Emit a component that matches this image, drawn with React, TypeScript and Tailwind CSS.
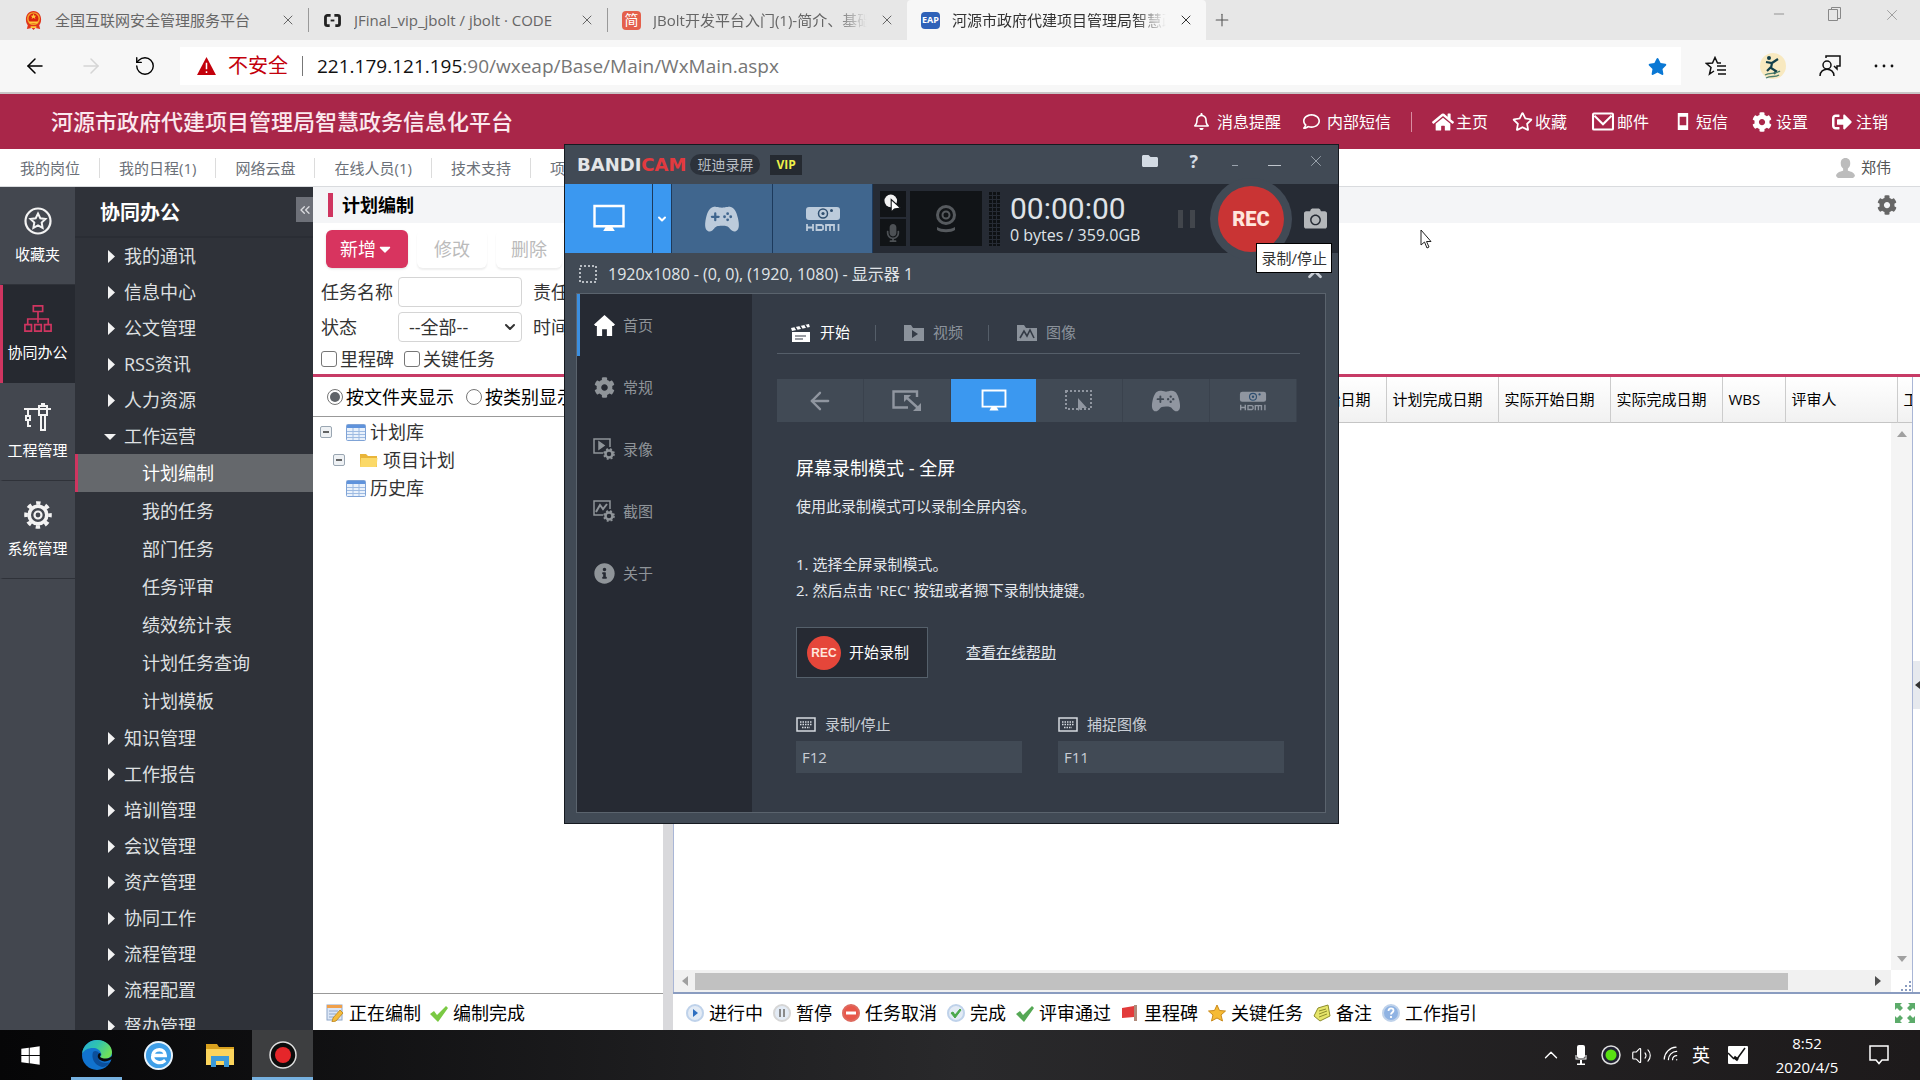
import React from "react";
import {
  FaHome, FaRegStar, FaCog, FaStar, FaWindows, FaFolder, FaCamera, FaMicrophone, FaInfoCircle,
  FaRegComment, FaSignOutAlt, FaRegBell, FaCaretDown,
} from "react-icons/fa";
import { IoGameController } from "react-icons/io5";
import { ArrowLeft, ArrowRight, RotateCw, X, Plus, Minus, ChevronDown, ChevronUp, ChevronsLeft, Wifi, Volume2 } from "lucide-react";

type P = { className?: string };

const Emblem = ({ className }: P) => (
  <svg viewBox="0 0 20 22" className={className}>
    <path d="M10 1C5 1 2 5 2 10c0 3 1 5 2 6l-1 4 5-1 2 2 2-2 5 1-1-4c1-1 2-3 2-6 0-5-3-9-8-9z" fill="#e0341c" />
    <circle cx="10" cy="9" r="6" fill="#d9230f" stroke="#f4a82a" strokeWidth="1.5" />
    <path d="M10 4l1 2h2l-1.600 1.300.6 2-2-1.100-2 1.100.6-2L7 6h2zM5.500 12h9v2h-9zM7 17h6v2H7z" fill="#ffc83a" />
  </svg>
);
const CodeMark = ({ className }: P) => (
  <svg viewBox="0 0 20 16" className={className} fill="none" stroke="#222" strokeWidth="3">
    <path d="M8 2.500H4.500a2 2 0 0 0-2 2v7a2 2 0 0 0 2 2H7M12 2.500h3.500a2 2 0 0 1 2 2v7a2 2 0 0 1-2 2H13" />
    <path d="M8 8h4" strokeWidth="2" />
  </svg>
);
const Monitor = ({ className }: P) => (
  <svg viewBox="0 0 34 30" className={className} fill="none" stroke="currentColor" strokeWidth="2.500">
    <path d="M2 2h30v21H2z" />
    <path d="M14 23h6l3 5H11z" fill="currentColor" stroke="none" />
  </svg>
);
const Hdmi = ({ className }: P) => (
  <svg viewBox="0 0 34 26" className={className}>
    <rect x="0" y="1" width="34" height="13" rx="3" fill="currentColor" />
    <circle cx="17" cy="7.500" r="4.500" fill="none" stroke="#2f4f70" strokeWidth="1.500" />
    <circle cx="17" cy="7.500" r="1.600" fill="#2f4f70" />
    <circle cx="25.500" cy="4.500" r="1.500" fill="#2f4f70" />
    <path d="M1 18v7M1 21.500h6M7 18v7M10.500 24V19h5l1.500 1v3l-1.500 1zM20 25v-6h8v6M24 19v6M32.500 18v7" fill="none" stroke="currentColor" strokeWidth="1.800" />
  </svg>
);
const Clapper = ({ className }: P) => (
  <svg viewBox="0 0 20 18" className={className} fill="currentColor">
    <path d="M0 4L18 0l.8 3L1 7zM1 8h18v10H1z" />
    <path d="M4 12h11M4 15h8" stroke="#343b46" strokeWidth="1.200" />
    <path d="M4 3l2 3M9 2l2 3M14 1l2 3" stroke="#343b46" strokeWidth="1.400" />
  </svg>
);
const VideoFolder = ({ className }: P) => (
  <svg viewBox="0 0 20 17" className={className}>
    <path d="M0 1h7l2 3h11v13H0z" fill="currentColor" />
    <path d="M8 6l6 4-6 4z" fill="#343b46" />
  </svg>
);
const ImageFolder = ({ className }: P) => (
  <svg viewBox="0 0 20 17" className={className}>
    <path d="M0 1h7l2 3h11v13H0z" fill="currentColor" />
    <path d="M3 14l4-7 3 5 3-6 4 8" fill="none" stroke="#343b46" strokeWidth="1.600" />
  </svg>
);
const RegionIcon = ({ className }: P) => (
  <svg viewBox="0 0 30 22" className={className} fill="none" stroke="currentColor" strokeWidth="2.400">
    <path d="M25 7V1.500H1.500v16H16M15 8l11 10" />
    <path d="M12 5h7l-7 7zM29 21h-8l8-8z" fill="currentColor" stroke="none" />
  </svg>
);
const AroundMouse = ({ className }: P) => (
  <svg viewBox="0 0 28 22" className={className} fill="none" stroke="currentColor" strokeWidth="2">
    <path d="M1 1h25v18H1z" strokeDasharray="2 2" />
    <path d="M13 8v13l3-3h6z" fill="currentColor" stroke="none" />
  </svg>
);
const Keyboard = ({ className }: P) => (
  <svg viewBox="0 0 20 15" className={className} fill="none" stroke="#d5dae0" strokeWidth="1.500">
    <path d="M1 1h18v13H1z" />
    <path d="M4 5h12M4 7.500h12M6 10.500h8" strokeDasharray="1.500 1" strokeWidth="1.300" />
  </svg>
);
const RecordSettings = ({ className, image }: P & { image?: boolean }) => (
  <svg viewBox="0 0 22 22" className={className} fill="none" stroke="currentColor" strokeWidth="1.500">
    <path d="M17 9V1H1v14h9" />
    {image ? <path d="M3 12l4-7 3 4 4-5" strokeWidth="2" /> : <path d="M6 4v7l5-3.500z" fill="currentColor" />}
    <circle cx="16" cy="16" r="3.500" strokeWidth="2.500" />
    <circle cx="16" cy="16" r="5" strokeDasharray="2 2" strokeWidth="1.600" />
  </svg>
);
const House = ({ className }: P) => (
  <svg viewBox="0 0 22 22" className={className} fill="#fff">
    <path d="M11 0l11 10-1.500 1.500H19V22h-5.500v-7h-5v7H3V11.500H1.500L0 10z" />
  </svg>
);
const Webcam = ({ className }: P) => (
  <svg viewBox="0 0 22 28" className={className} fill="none" stroke="#565a5e">
    <circle cx="11" cy="10" r="8.500" strokeWidth="3" />
    <circle cx="11" cy="10" r="3.500" strokeWidth="2" />
    <path d="M2 22c5 3 13 3 18 0v3c-4 3-14 3-18 0z" fill="#565a5e" stroke="none" />
  </svg>
);
const GearOutline = ({ className }: P) => (
  <svg viewBox="0 0 28 28" className={className} fill="none" stroke="#f3f3f3">
    <circle cx="14" cy="14" r="8.800" strokeWidth="3.600" />
    <circle cx="14" cy="14" r="3.500" strokeWidth="2.200" />
    <circle cx="14" cy="14" r="12" strokeWidth="3.600" strokeDasharray="4.400 5.020" strokeDashoffset="2.200" />
  </svg>
);
const OrgChart = ({ className }: P) => (
  <svg viewBox="0 0 30 30" className={className} fill="none" stroke="#cf3560" strokeWidth="1.800">
    <path d="M10 1h10v6H10zM15 7v12M4 20v-5h22v5M1 21h7v7H1zM11.500 21h7v7h-7zM22 21h7v7h-7z" />
  </svg>
);
const Crane = ({ className }: P) => (
  <svg viewBox="0 0 28 28" className={className} fill="none" stroke="#f3f3f3" strokeWidth="2">
    <path d="M0 6h27M15 3h8v9h-8zM17 12v15h4V12M17 1h4M4 6v7M2 13h4v4H2zM4 17v6h3" />
  </svg>
);
const StarRing = ({ className }: P) => (
  <svg viewBox="0 0 28 28" className={className} fill="none" stroke="#f3f3f3" strokeWidth="2.200">
    <circle cx="14" cy="14" r="12.500" />
    <path d="M14 6.500l2.300 4.800 5.200.7-3.800 3.600.9 5.200-4.600-2.500-4.600 2.500.9-5.200L6.500 12l5.200-.7z" strokeWidth="2" />
  </svg>
);
const TableIcon = ({ className }: P) => (
  <svg viewBox="0 0 20 17" className={className}>
    <rect x=".5" y=".5" width="19" height="16" rx="1" fill="#e9f1fb" stroke="#7fa3d6" />
    <path d="M1 1h18v3H1z" fill="#5f93dc" />
    <path d="M1 7.500h18M1 10.500h18M1 13.500h18M7 4v12M13 4v12" stroke="#9ebbe2" />
  </svg>
);
const YellowFolder = ({ className }: P) => (
  <svg viewBox="0 0 19 15" className={className}>
    <path d="M1 1h6l2 2h9v11H1z" fill="#e9b53a" />
    <path d="M2 5h16.500l-1 9H1z" fill="#fbd968" />
  </svg>
);
const Person = ({ className }: P) => (
  <svg viewBox="0 0 20 21" className={className} fill="#bcbcbc">
    <path d="M10 0c3.500 0 5 2.500 5 5.500 0 2.500-1 4.500-2.500 5.500v2.500c3 1 7 1.500 7.500 5.500l-2 2H2l-2-2c.5-4 4.500-4.500 7.500-5.500V11C6 10 5 8 5 5.500 5 2.500 6.500 0 10 0z" />
  </svg>
);

const PencilForm = () => (
  <svg viewBox="0 0 18 18" className="size-[18px]">
    <rect x="1" y="1" width="15" height="15" fill="#dbe6f6" stroke="#8ea6c8" />
    <path d="M1 1h15v3H1z" fill="#f0a04b" />
    <path d="M3 7h9M3 10h7M3 13h5" stroke="#8ea6c8" />
    <path d="M14 6l3 3-7 8-4 1 1-4z" fill="#f4bb3a" stroke="#b98219" strokeWidth=".8" />
  </svg>
);
const Check = ({ color }: { color: string }) => (
  <svg viewBox="0 0 18 18" className="size-[18px]"><path d="M0 10l4-3 3 4 9-9 2 2L8 18z" fill={color} /></svg>
);
const Disc = ({ kind }: { kind: "play" | "pause" | "stop" | "ok" | "help" }) => (
  <svg viewBox="0 0 18 18" className="size-[18px]">
    <circle cx="9" cy="9" r="8" fill={kind === "stop" ? "#e8574a" : kind === "help" ? "#8fb3e3" : "#e3ebf5"} stroke={kind === "stop" ? "#dd6a5f" : kind === "pause" ? "#d6d6d6" : "#bfd2ea"} strokeWidth="2" />
    {kind === "play" && <path d="M7 5l5 4-5 4z" fill="#2f6fc0" />}
    {kind === "pause" && <path d="M6 5h2v8H6zM10 5h2v8h-2z" fill="#8a8a8a" />}
    {kind === "stop" && <path d="M4 7.500h10v3H4z" fill="#fff" />}
    {kind === "ok" && <path d="M4 9l2-1 2 3 5-6 1 1-6 8z" fill="#4aa84a" stroke="#4aa84a" />}
    {kind === "help" && <path d="M6.500 7c0-3.500 5-3.500 5-.5 0 2-2.500 2-2.500 4M9 12v2" fill="none" stroke="#fff" strokeWidth="1.800" />}
  </svg>
);
const Flag = () => (
  <svg viewBox="0 0 18 18" className="size-[18px]"><path d="M1 4l12-2v11L1 14z" fill="#e23b3b" /><path d="M13 1h3v16h-3z" fill="#b08a7a" /></svg>
);
const GoldStar = () => (
  <svg viewBox="0 0 18 18" className="size-[18px]"><path d="M9 1l2.500 5.500 6 .5-4.500 4 1.500 6L9 14l-5.500 3L5 11 .5 7l6-.5z" fill="#f6bb35" stroke="#c98a1b" /></svg>
);
const Note = () => (
  <svg viewBox="0 0 18 18" className="size-[18px]"><path d="M5 4l10-3 2 11-10 5-6-5z" fill="#e6e56a" stroke="#8d8d2c" /><path d="M6 7l7-2M6 10l8-3M6 13l8-3" stroke="#8d8d2c" /></svg>
);

const tabs = [
  { icon: <Emblem className="h-[21px] w-[19px]" />, text: "全国互联网安全管理服务平台", fade: false },
  { icon: <CodeMark className="h-[15px] w-[19px]" />, text: "JFinal_vip_jbolt / jbolt · CODE", fade: false },
  { icon: <span className="flex size-[19px] items-center justify-center rounded-sm bg-[#e4604c] text-sm text-white">简</span>, text: "JBolt开发平台入门(1)-简介、基础", fade: true },
  { icon: <span className="flex h-[17px] w-[19px] items-center justify-center rounded-sm bg-[#2f62b8] text-[9px] font-bold text-white">EAP</span>, text: "河源市政府代建项目管理局智慧政务", fade: true },
];

function Browser() {
  return (
    <>
      <div className="flex h-10 shrink-0 items-stretch bg-[#e7e7e7] pl-2.5">
        {tabs.map((t, i) => (
          <div key={t.text} className={"flex w-[299px] items-center gap-3 pr-3 pl-3.5 " + (i === 3 ? "rounded-t bg-[#f7f7f7] text-[#333]" : "text-[#666]")}>
            {t.icon}
            <span className={"min-w-0 flex-1 overflow-hidden text-[15px] whitespace-nowrap " + (t.fade ? "[mask-image:linear-gradient(to_right,black_85%,transparent)]" : "")}>{t.text}</span>
            <button aria-label="关闭标签页"><X className="size-4" strokeWidth={1.5} /></button>
            {i < 2 && <span className="-mr-3 h-6 w-px bg-[#999]" />}
          </div>
        ))}
        <button aria-label="新建标签页" className="ml-1.5 text-[#555]"><Plus className="size-5" strokeWidth={1.3} /></button>
        <div className="ml-auto flex items-start gap-10 pt-1.5 pr-[19px] text-[#888]">
          <button aria-label="最小化"><Minus className="size-4" strokeWidth={1.3} /></button>
          <button aria-label="还原">
            <svg viewBox="0 0 16 16" className="size-4" fill="none" stroke="currentColor"><path d="M1.500 3.500h9v11h-9zM4.500 3.500v-2h9v11h-3" /></svg>
          </button>
          <button aria-label="关闭"><X className="size-[18px]" strokeWidth={1} /></button>
        </div>
      </div>
      <div className="flex h-[54px] shrink-0 items-center border-b-2 border-[#c9c5c6] bg-[#f7f7f7] text-black">
        <button aria-label="后退" className="ml-[23px]"><ArrowLeft className="size-6" strokeWidth={1.5} /></button>
        <button aria-label="前进" className="ml-8 text-[#d5d5d5]"><ArrowRight className="size-6" strokeWidth={1.5} /></button>
        <button aria-label="刷新" className="ml-[31px]"><RotateCw className="size-[22px] -scale-x-100" strokeWidth={1.5} /></button>
        <div className="ml-6 flex h-[38px] flex-1 items-center bg-white pr-3.5 pl-[17px] text-xl">
          <svg viewBox="0 0 20 19" className="h-[18px] w-[19px]"><path d="M10 0l10 19H0z" fill="#c3000b" /><path d="M10 6v7M10 15v2" stroke="#fff" strokeWidth="1.600" /></svg>
          <span className="ml-3 text-[#c3000b]">不安全</span>
          <span className="mx-3.5 h-5 w-px bg-[#777]" />
          <span className="text-[19px] text-[#767676]"><span className="text-[#111]">221.179.121.195</span>:90/wxeap/Base/Main/WxMain.aspx</span>
          <FaStar className="ml-auto size-[19px] text-[#0a78d4]" />
        </div>
        <div className="flex items-center gap-[33px] pr-[26px] pl-6">
          <svg viewBox="0 0 22 20" className="h-5 w-[22px]" fill="none" stroke="#111" strokeWidth="1.500"><path d="M16 7h-3.500L10 1.500 7.500 7 1.500 7.500 6 11.500 4.500 18 9 15M12 10h9M12 14h9M13 18h8" /></svg>
          <svg viewBox="0 0 26 26" className="size-[26px]"><circle cx="13" cy="13" r="13" fill="#f8e9c0" /><circle cx="9" cy="5" r="2" fill="#123f4a" /><path d="M6 9l6 1 6-4M12 10l-1 5 5 3-2 3M11 14l-4 4" fill="none" stroke="#123f4a" strokeWidth="2.200" /><path d="M5 22c5-3 10 0 15-4M6 25c5-3 9 0 13-3" fill="none" stroke="#4c7d6c" strokeWidth="1.400" /></svg>
          <svg viewBox="0 0 22 22" className="size-[22px]" fill="none" stroke="#111" strokeWidth="1.500"><circle cx="8" cy="10" r="4" /><path d="M1 21c0-9 14-9 14 0M7 3V1h14v10h-3v3l-3-3" /></svg>
          <svg viewBox="0 0 20 6" className="h-1.5 w-5" fill="#111"><circle cx="2" cy="3" r="1.400" /><circle cx="10" cy="3" r="1.400" /><circle cx="18" cy="3" r="1.400" /></svg>
        </div>
      </div>
    </>
  );
}

function TopBar() {
  return (
    <header className="flex h-[55px] shrink-0 items-center bg-[#a92649] pr-8 pl-[51px] text-white">
      <h1 className="text-[22px] font-medium text-[#fbe9ee]">河源市政府代建项目管理局智慧政务信息化平台</h1>
      <nav className="ml-auto flex items-center text-base">
        <a href="#notice" className="flex items-center gap-[7px]"><FaRegBell className="size-[17px]" />消息提醒</a>
        <a href="#im" className="ml-[22px] flex items-center gap-[7px]"><FaRegComment className="size-[17px]" />内部短信</a>
        <span className="mx-5 h-5 w-px bg-[#d98da1]" />
        <div className="flex gap-6">
          <a href="#home" className="flex items-center gap-0.5"><FaHome className="size-[22px]" />主页</a>
          <a href="#fav" className="flex items-center gap-0.5"><FaRegStar className="size-[21px]" />收藏</a>
          <a href="#mail" className="flex items-center gap-0.5">
            <svg viewBox="0 0 24 20" className="h-[19px] w-6" fill="none" stroke="currentColor" strokeWidth="2.200"><rect x="1.500" y="1.500" width="21" height="17" rx="1" /><path d="M3 4l9 9 9-9" /></svg>邮件
          </a>
          <a href="#sms" className="flex items-center gap-1">
            <svg viewBox="0 0 20 18" className="h-[17px] w-[19px]"><path d="M6 1h9v16H6z" fill="none" stroke="currentColor" strokeWidth="2" /><path d="M6 13h9v4H6zM6 1h9v3H6z" fill="currentColor" /></svg>短信
          </a>
          <a href="#settings" className="flex items-center gap-1"><FaCog className="size-5" />设置</a>
          <a href="#logout" className="flex items-center gap-1"><FaSignOutAlt className="size-5" />注销</a>
        </div>
      </nav>
    </header>
  );
}

function SubNav() {
  return (
    <div className="flex h-[38px] shrink-0 items-center border-b border-[#d9dbde] bg-white pl-px text-[15px] text-[#6b7078]">
      {["我的岗位", "我的日程(1)", "网络云盘", "在线人员(1)", "技术支持", "项目门户"].map((t) => (
        <a key={t} href="#nav" className="border-r border-[#dcdcdc] px-[19px] leading-5">{t}</a>
      ))}
      <span className="ml-auto flex items-center gap-1.5 pr-[29px] text-[#555]"><Person className="h-5 w-[19px]" />郑伟</span>
    </div>
  );
}

const modules = [
  { t: "收藏夹", i: <StarRing className="size-7" /> },
  { t: "协同办公", i: <OrgChart className="size-7" /> },
  { t: "工程管理", i: <Crane className="size-7" /> },
  { t: "系统管理", i: <GearOutline className="size-7" /> },
];
const before = ["我的通讯", "信息中心", "公文管理", "RSS资讯", "人力资源"];
const children = ["计划编制", "我的任务", "部门任务", "任务评审", "绩效统计表", "计划任务查询", "计划模板"];
const after = ["知识管理", "工作报告", "培训管理", "会议管理", "资产管理", "协同工作", "流程管理", "流程配置", "督办管理"];

const MenuGroup = ({ text, open }: { text: string; open?: boolean }) => (
  <a href="#menu" className="flex h-9 items-center pl-7">
    <svg viewBox="0 0 13 13" className="mr-2 size-[13px]" fill="#f2f2f2">
      {open ? <path d="M1 4h12l-6 6z" /> : <path d="M5 0l7 6.500L5 13z" />}
    </svg>
    {text}
  </a>
);

function Sidebar() {
  return (
    <>
      <nav className="w-[75px] shrink-0 bg-[#43474f]">
        {modules.map((m, i) => (
          <a key={m.t} href="#module" className={"flex h-[98px] flex-col items-center border-l-[3px] pt-5 pr-[3px] text-[15px] leading-5 text-white " + (i === 1 ? "border-l-[#cf3560] bg-[#262930]" : "border-l-transparent border-b border-b-[#2f3239]")}>
            {m.i}
            <span className="mt-[9px] whitespace-nowrap">{m.t}</span>
          </a>
        ))}
      </nav>
      <nav className="w-[238px] shrink-0 overflow-hidden bg-[#2f3239] text-lg text-[#dfe0e2]">
        <div className="flex h-[51px] items-center border-b-2 border-[#2a2d34] pt-0.5 pl-[25px]">
          <h2 className="text-xl font-bold text-white">协同办公</h2>
          <button aria-label="收起菜单" className="mb-1.5 ml-auto flex h-[25px] w-[17px] items-center justify-center bg-[#6d7078]"><ChevronsLeft className="size-4 text-[#d9dade]" /></button>
        </div>
        {before.map((t) => <MenuGroup key={t} text={t} />)}
        <MenuGroup text="工作运营" open />
        {children.map((t, i) => (
          <a key={t} href="#item" className={"flex h-[38px] items-center border-l-[3px] pl-16 " + (i === 0 ? "border-[#cf3560] bg-[#65686c] text-white" : "border-transparent")}>{t}</a>
        ))}
        {after.map((t) => <MenuGroup key={t} text={t} />)}
      </nav>
    </>
  );
}

const check = "size-4 appearance-none rounded-[3px] border border-[#767676] bg-white";
const radio = "size-4 appearance-none rounded-full border border-[#767676] bg-white p-[2px] bg-clip-content checked:bg-[#5f6368]";

function Filters() {
  return (
    <>
      <div className="flex h-9 shrink-0 items-center bg-[#f4f5f7] pr-[23px] pl-[15px]">
        <span className="h-6 w-[5px] bg-[#cf3560]" />
        <h2 className="ml-[9px] text-lg font-bold text-black">计划编制</h2>
        <button aria-label="页面设置" className="ml-auto text-[#666]"><FaCog className="size-5" /></button>
      </div>
      <form className="shrink-0 border-b-[3px] border-[#c73b66] bg-white pt-[7px] pb-1 pl-2 text-lg leading-[22px] text-[#333]">
        <div className="flex h-[38px] gap-[9px] pl-[5px]">
          <button type="button" className="flex w-[82px] items-center justify-center rounded-md bg-[#d8345f] text-white shadow">新增<FaCaretDown className="size-[18px]" /></button>
          <button type="button" disabled className="w-[70px] rounded-md text-[#bbb] shadow-[0_2px_2px_#eee]">修改</button>
          <button type="button" disabled className="w-[66px] rounded-md text-[#bbb] shadow-[0_2px_2px_#eee]">删除</button>
        </div>
        <div className="mt-[9px] flex h-[30px] items-center">
          <label htmlFor="task" className="w-[77px]">任务名称</label>
          <input id="task" className="h-[30px] w-[124px] rounded border border-[#d5d5d5] px-2" />
          <label htmlFor="owner" className="ml-[11px]">责任人</label>
          <input id="owner" className="ml-2 h-[30px] w-[124px] rounded border border-[#d5d5d5] px-2" />
        </div>
        <div className="mt-[5px] flex h-[30px] items-center">
          <label htmlFor="state" className="w-[77px]">状态</label>
          <span className="grid w-[124px] items-center">
            <select id="state" className="col-start-1 row-start-1 h-[30px] w-full appearance-none rounded border border-[#d5d5d5] bg-white pl-2.5"><option>--全部--</option></select>
            <ChevronDown className="pointer-events-none col-start-1 row-start-1 mr-1 size-4 justify-self-end" strokeWidth={3} />
          </span>
          <label htmlFor="time" className="ml-[11px]">时间</label>
          <input id="time" className="ml-2 h-[30px] w-[124px] rounded border border-[#d5d5d5] px-2" />
        </div>
        <div className="mt-1.5 flex h-[22px] items-center gap-2.5">
          <label className="flex items-center gap-[3px]"><input type="checkbox" className={check} />里程碑</label>
          <label className="flex items-center gap-[3px]"><input type="checkbox" className={check} />关键任务</label>
        </div>
      </form>
    </>
  );
}

const Toggle = () => (
  <button aria-label="折叠" className="flex">
    <svg viewBox="0 0 12 12" className="size-3"><rect x=".5" y=".5" width="11" height="11" rx="1.500" fill="#eef1f4" stroke="#9aa6b2" /><path d="M3 6h6" stroke="#333" strokeWidth="1.500" /></svg>
  </button>
);

const Status = ({ icon, text }: { icon: React.ReactNode; text: string }) => (
  <span className="flex items-center gap-[5px]">{icon}{text}</span>
);

const cols = ["计划完成日期", "实际开始日期", "实际完成日期"];
const th = "h-[45px] overflow-hidden border-r border-[#ccc] px-1.5 text-left font-normal whitespace-nowrap";

function Workspace() {
  return (
    <div className="flex min-h-0 flex-1 bg-white">
      <section className="flex w-[350px] shrink-0 flex-col text-lg leading-[22px]">
        <div className="flex h-10 items-center gap-3 border-b border-[#999] pl-3.5 text-black">
          <label className="flex items-center gap-[3px]"><input type="radio" name="view" defaultChecked className={radio} />按文件夹显示</label>
          <label className="flex items-center gap-[3px] whitespace-nowrap"><input type="radio" name="view" className={radio} />按类别显示</label>
        </div>
        <div className="flex-1 pt-px pl-[7px] text-[#333]">
          <div className="flex h-7 items-center"><Toggle /><TableIcon className="mr-1 ml-3.5 h-[17px] w-5" />计划库</div>
          <div className="flex h-7 items-center pl-[13px]"><Toggle /><YellowFolder className="mr-[5px] ml-3.5 h-[15px] w-[19px]" />项目计划</div>
          <div className="flex h-7 items-center pl-[26px]"><TableIcon className="mr-1 h-[17px] w-5" />历史库</div>
        </div>
        <footer className="flex h-[37px] items-center gap-[9px] border-t border-[#999] pt-0.5 pl-[13px] text-black">
          <Status icon={<PencilForm />} text="正在编制" />
          <Status icon={<Check color="#7ac943" />} text="编制完成" />
        </footer>
      </section>
      <div className="w-2.5 shrink-0 bg-[#d9d9dc]" />
      <section className="flex min-w-0 flex-1 flex-col">
        <div className="flex min-h-0 flex-1">
          <div className="flex min-w-0 flex-1 flex-col border-x border-[#a9b6d6]">
            <table className="w-full table-fixed bg-gradient-to-b from-white to-[#f1f1f1] text-[15px] text-black">
              <thead>
                <tr className="border-b border-[#c5c5c5]">
                  <th className={th}>任务名称</th>
                  <th className={th + " w-[112px]"}>计划开始日期</th>
                  {cols.map((c) => <th key={c} className={th + " w-[112px]"}>{c}</th>)}
                  <th className={th + " w-[63px]"}>WBS</th>
                  <th className={th + " w-[112px]"}>评审人</th>
                  <th className="h-[45px] w-[15px] overflow-hidden pl-1.5 text-left font-normal whitespace-nowrap">工</th>
                </tr>
              </thead>
            </table>
            <div className="flex min-h-0 flex-1 justify-end">
              <div className="flex w-[21px] flex-col items-center justify-between bg-[#f4f4f4] py-2">
                <svg viewBox="0 0 10 6" className="h-1.5 w-2.5" fill="#a0a0a0"><path d="M5 0l5 6H0z" /></svg>
                <svg viewBox="0 0 10 6" className="h-1.5 w-2.5" fill="#a0a0a0"><path d="M5 6l5-6H0z" /></svg>
              </div>
            </div>
            <div className="flex h-[22px] items-center bg-[#f1f1f1]">
              <svg viewBox="0 0 6 10" className="ml-2 h-2.5 w-1.5" fill="#a0a0a0"><path d="M6 0v10L0 5z" /></svg>
              <span className="mr-[87px] ml-[7px] h-[17px] flex-1 bg-[#c1c1c1]" />
              <svg viewBox="0 0 6 10" className="mr-2.5 h-2.5 w-1.5" fill="#505050"><path d="M0 0v10l6-5z" /></svg>
              <span className="flex h-full w-[21px] items-end justify-end bg-white">
                <svg viewBox="0 0 12 12" className="size-3" fill="#8a9cc0"><path d="M9 1h2v2H9zM9 5h2v2H9zM5 5h2v2H5zM9 9h2v2H9zM5 9h2v2H5zM1 9h2v2H1z" /></svg>
              </span>
            </div>
          </div>
          <div className="flex w-[7px] items-center">
            <button aria-label="展开侧栏" className="flex h-12 w-full items-center justify-end bg-[#e6e9ee]"><svg viewBox="0 0 5 8" className="h-2 w-[5px]"><path d="M5 0v8L0 4z" fill="#333" /></svg></button>
          </div>
        </div>
        <footer className="flex h-[38px] items-center gap-2.5 border-t-2 border-[#8a9cc0] pt-0.5 pr-[5px] pl-[13px] text-lg text-black">
          <Status icon={<Disc kind="play" />} text="进行中" />
          <Status icon={<Disc kind="pause" />} text="暂停" />
          <Status icon={<Disc kind="stop" />} text="任务取消" />
          <Status icon={<Disc kind="ok" />} text="完成" />
          <Status icon={<Check color="#55a855" />} text="评审通过" />
          <Status icon={<Flag />} text="里程碑" />
          <Status icon={<GoldStar />} text="关键任务" />
          <Status icon={<Note />} text="备注" />
          <Status icon={<Disc kind="help" />} text="工作指引" />
          <button aria-label="全屏" className="ml-auto">
            <svg viewBox="0 0 20 20" className="size-5" fill="#5cab6a"><path d="M0 0h7L5 2l3 3-3 3-3-3-2 2zM20 0v7l-2-2-3 3-3-3 3-3-2-2zM0 20v-7l2 2 3-3 3 3-3 3 2 2zM20 20h-7l2-2-3-3 3-3 3 3 2-2z" /></svg>
          </button>
        </footer>
      </section>
    </div>
  );
}

function Taskbar() {
  return (
    <div className="flex h-[50px] shrink-0 items-stretch bg-gradient-to-r from-[#060607] via-[#29292b] to-[#1d1a1b] text-white">
      <button aria-label="开始" className="flex w-[60px] items-center justify-center"><FaWindows className="size-[21px]" /></button>
      <button aria-label="Edge" className="ml-[11px] flex w-[51px] items-center justify-center border-y-[3px] border-t-transparent border-b-[#76b1e0]">
        <svg viewBox="0 0 30 30" className="size-[30px]">
          <defs>
            <linearGradient id="eg" x1="0" y1="0" x2="1" y2=".5"><stop offset="0" stopColor="#27a9d8" /><stop offset=".5" stopColor="#2fc3b0" /><stop offset="1" stopColor="#6fe05a" /></linearGradient>
          </defs>
          <circle cx="15" cy="15" r="15" fill="#1173cf" />
          <path d="M0 14C1 5 8 0 15 0c9 0 15 6 15 12 0 5-4 7-8 7-3 0-4-1-4-2 1-1 2-2 1-4-1-3-4-5-8-5C6 8 2 10 0 14z" fill="url(#eg)" />
          <path d="M11 12c-2 6 1 13 9 15 3 0 6-2 8-5-4 2-9 1-11-2-1-2-1-4 1-6-2-3-5-4-7-2z" fill="#0b4f9c" />
          <path d="M18 13c-3 1-3 5 0 7 3 2 7 2 12-1v-3c-3 3-7 3-10 2-2-1-2-1-2-2 1-1 1-2 0-3z" fill="#0a0b0c" />
        </svg>
      </button>
      <button aria-label="浏览器" className="ml-2 flex w-14 items-center justify-center">
        <svg viewBox="0 0 30 30" className="size-[29px]"><circle cx="15" cy="15" r="14" fill="#3f9fe8" stroke="#e8f3fb" strokeWidth="2" /><path d="M22 20c-6 5-14 1-13-5 1-8 13-8 13 0H10" fill="none" stroke="#fff" strokeWidth="3.500" /></svg>
      </button>
      <button aria-label="文件资源管理器" className="ml-1.5 flex w-14 items-center justify-center">
        <svg viewBox="0 0 28 24" className="h-6 w-7"><path d="M0 1h11l2 3h15v6H0z" fill="#d9a11e" /><path d="M0 6h28v16H0z" fill="#fbd45c" /><path d="M5 24V13h18v11h-5v-6h-8v6z" fill="#3b9ad9" /></svg>
      </button>
      <button aria-label="Bandicam" className="ml-1 flex w-[61px] items-center justify-center border-y-[3px] border-t-[#3d3e40] border-b-[#76b1e0] bg-[#3d3e40]">
        <svg viewBox="0 0 28 28" className="size-7"><circle cx="14" cy="14" r="13" fill="#0c0c0c" stroke="#ddd" strokeWidth="1.500" /><circle cx="14" cy="14" r="8" fill="#e5262a" /></svg>
      </button>
      <div className="ml-auto flex items-center pr-[31px]">
        <ChevronUp className="size-[22px]" strokeWidth={1.5} />
        <svg viewBox="0 0 14 22" className="ml-3 h-[22px] w-3.5" fill="#fff"><rect x="3" y="1" width="8" height="13" rx="2" /><path d="M1.500 11v4.500h11V11h-1v3.500h-9V11zM6 15h2v5H6zM3 19.500h8V21H3z" /></svg>
        <svg viewBox="0 0 20 20" className="ml-[13px] size-5"><circle cx="10" cy="10" r="9" fill="#223" stroke="#ddd" strokeWidth="1.500" /><circle cx="10" cy="10" r="5.500" fill="#59e012" /></svg>
        <Volume2 className="ml-2.5 size-[21px]" strokeWidth={1.3} />
        <Wifi className="ml-2.5 size-5 -rotate-45" strokeWidth={1.5} />
        <span className="ml-2.5 text-lg">英</span>
        <svg viewBox="0 0 20 18" className="ml-[18px] h-[18px] w-5"><rect width="20" height="18" rx="1" fill="#fff" /><path d="M0 7l6 6M9 13l8-11" stroke="#111" strokeWidth="1.500" /><path d="M6 11l4 3" stroke="#111" strokeWidth="3" /></svg>
        <div className="ml-6 w-[70px] text-center text-[15px] leading-6">8:52<br />2020/4/5</div>
        <svg viewBox="0 0 20 20" className="ml-[27px] size-5" fill="none" stroke="#fff" strokeWidth="1.500"><path d="M1 1h18v14h-6l-3 3.500L7 15H1z" /></svg>
      </div>
    </div>
  );
}

const sideItems = [
  { t: "首页", i: <House className="size-[21px]" /> },
  { t: "常规", i: <FaCog className="size-[21px]" /> },
  { t: "录像", i: <RecordSettings className="size-[22px]" /> },
  { t: "截图", i: <RecordSettings image className="size-[22px]" /> },
  { t: "关于", i: <FaInfoCircle className="size-[21px]" /> },
];
const modes = [
  { t: "返回", i: <ArrowLeft className="size-7" strokeWidth={2} /> },
  { t: "矩形区域", i: <RegionIcon className="h-[22px] w-[30px]" /> },
  { t: "全屏", i: <Monitor className="h-[23px] w-[26px]" /> },
  { t: "鼠标周围", i: <AroundMouse className="h-[22px] w-7" /> },
  { t: "游戏", i: <IoGameController className="size-[30px]" /> },
  { t: "HDMI", i: <Hdmi className="h-5 w-7" /> },
];

function Recorder() {
  return (
    <div className="absolute top-[144px] left-[564px] w-[775px] border border-[#161a20] bg-[#414a55] text-[15px] text-[#c9ced5]">
      <div className="flex h-[39px] items-center pr-[13px] pl-3">
        <span className="font-['DejaVu_Sans'] text-lg font-bold text-[#e4e6e8]">BANDI<span className="text-[#e23a3f]">CAM</span></span>
        <span className="ml-1 rounded-full bg-[#2c323b] px-[7px] text-sm leading-[21px] text-[#b9bec4]">班迪录屏</span>
        <span className="ml-2.5 bg-[#252a31] px-1.5 text-xs leading-5 font-bold text-[#eef04a]">VIP</span>
        <div className="mb-2 ml-auto flex items-center text-[#d3dbe4]">
          <button aria-label="打开文件夹"><FaFolder className="size-4" /></button>
          <button aria-label="帮助" className="ml-[31px] text-lg leading-5 font-bold">?</button>
          <button aria-label="最小化到托盘" className="mt-2.5 ml-[34px] h-px w-1.5 bg-[#9aa3ad]" />
          <button aria-label="最小化" className="mt-2.5 ml-[30px] h-px w-[13px] bg-[#c0c6cd]" />
          <button aria-label="关闭" className="ml-[26px]"><X className="size-[18px] text-[#9aa3ad]" strokeWidth={1.3} /></button>
        </div>
      </div>
      <div className="flex h-[69px] bg-[#262b34]">
        <div className="flex gap-px bg-[#1d3a5c] pr-px">
          <button aria-label="屏幕录制" className="flex w-[87px] items-center justify-center bg-[#3b98f0] text-white"><Monitor className="h-[29px] w-[34px]" /></button>
          <button aria-label="更多屏幕模式" className="flex w-[18px] items-center justify-center bg-[#3b98f0] text-white"><ChevronDown className="size-3" strokeWidth={4} /></button>
          <button aria-label="游戏录制" className="flex w-[100px] items-center justify-center bg-[#40668e] text-[#bccbdb]"><IoGameController className="size-9" /></button>
          <button aria-label="设备录制" className="flex w-[99px] items-center justify-center bg-[#40668e] text-[#bccbdb]"><Hdmi className="h-[26px] w-[34px]" /></button>
        </div>
        <div className="ml-[7px] flex items-center gap-1">
          <div className="flex flex-col gap-0.5">
            <button aria-label="鼠标效果" className="flex h-[26px] w-[26px] items-center justify-center bg-[#111417]">
              <svg viewBox="0 0 20 22" className="h-5 w-[18px]"><circle cx="7.500" cy="7.500" r="7" fill="#f2f2f2" /><path d="M8 6v14l3.500-3.500 7-1z" fill="#fff" stroke="#111417" strokeWidth="1.200" /></svg>
            </button>
            <button aria-label="麦克风" className="flex h-[27px] w-[26px] items-center justify-center bg-[#111417]"><FaMicrophone className="size-[18px] text-[#4d5155]" /></button>
          </div>
          <button aria-label="摄像头" className="flex h-[55px] w-[72px] items-center justify-center bg-[#111417]"><Webcam className="h-7 w-[22px]" /></button>
          <span className="ml-0.5 h-[55px] w-3 bg-[#0e1114] [background-image:linear-gradient(#262b34_1px,transparent_1px),linear-gradient(to_right,#262b34_1px,transparent_1px)] bg-[size:4px_4px]" />
        </div>
        <div className="ml-2.5 flex flex-col justify-center pt-1 text-[#dfe3e8]">
          <span className="font-[Roboto] text-[30px] leading-[28px]">00:00:00</span>
          <span className="text-base leading-6">0 bytes / 359.0GB</span>
        </div>
        <div className="ml-auto flex items-center pr-[11px]">
          <button aria-label="暂停" className="flex gap-[7px]"><span className="h-[18px] w-[5px] bg-[#42464c]" /><span className="h-[18px] w-[5px] bg-[#42464c]" /></button>
          <button className="-my-2 ml-[15px] flex size-[82px] items-center justify-center rounded-full bg-[#414a55]">
            <span className="flex size-[66px] items-center justify-center rounded-full bg-[#c93434] font-[Roboto] text-xl font-black text-[#ffe5dc]">REC</span>
          </button>
          <button aria-label="截图" className="ml-3 text-[#b4b7ba]"><FaCamera className="size-[23px]" /></button>
        </div>
      </div>
      <div className="flex h-10 items-center pt-0.5 pr-3 pl-3.5 text-base">
        <svg viewBox="0 0 18 18" className="size-[18px]" fill="none" stroke="#e0e4e8" strokeWidth="1.500"><path d="M1 1h16v16H1z" strokeDasharray="2 2" /></svg>
        <span className="ml-[11px] text-[#e0e4e8]">1920x1080 - (0, 0), (1920, 1080) - 显示器 1</span>
        <ChevronUp className="ml-auto size-[22px]" strokeWidth={3} />
      </div>
      <div className="mr-3 mb-2.5 ml-[11px] flex h-[520px] border border-[#5a636d] bg-[#343b46]">
        <nav className="w-[175px] shrink-0 bg-[#262a33] text-[#8f9499]">
          {sideItems.map((s, i) => (
            <a key={s.t} href="#tab" className={"flex h-[62px] items-center gap-2 border-l-[3px] pl-[13px] " + (i === 0 ? "border-[#3b8fe0]" : "border-transparent")}>
              <span className="flex w-[22px] justify-center">{s.i}</span>{s.t}
            </a>
          ))}
        </nav>
        <div className="flex-1 pr-[25px] pl-[25px]">
          <div className="flex h-[60px] items-center border-b border-[#555e69] pt-[18px] pl-3.5 text-[#8b929b]">
            <button className="flex items-center gap-[9px] text-white"><Clapper className="h-[18px] w-5" />开始</button>
            <span className="ml-[25px] h-4 w-px bg-[#555e69]" />
            <button className="ml-7 flex items-center gap-[9px]"><VideoFolder className="h-[17px] w-5" />视频</button>
            <span className="ml-[25px] h-4 w-px bg-[#555e69]" />
            <button className="ml-7 flex items-center gap-[9px]"><ImageFolder className="h-[17px] w-5" />图像</button>
          </div>
          <div className="mt-[25px] mr-[3px] flex h-[43px] bg-[#414a55] text-[#9096a0]">
            {modes.map((m, i) => (
              <button key={m.t} aria-label={m.t} className={"flex flex-1 items-center justify-center " + (i === 2 ? "bg-[#3b98f0] text-white" : "border-r border-[#3a424d]")}>{m.i}</button>
            ))}
          </div>
          <div className="pl-[19px] text-[#e3e7ec]">
            <h3 className="mt-[34px] text-lg leading-6 text-white">屏幕录制模式 - 全屏</h3>
            <p className="mt-3.5 leading-6">使用此录制模式可以录制全屏内容。</p>
            <ol className="mt-[33px] leading-[26px]">
              <li>1. 选择全屏录制模式。</li>
              <li>2. 然后点击 'REC' 按钮或者摁下录制快捷键。</li>
            </ol>
            <div className="mt-6 flex items-center">
              <button className="flex h-[51px] w-[132px] items-center gap-2 border border-[#55606b] bg-[#262a33] pl-2.5 text-white">
                <span className="flex size-[34px] items-center justify-center rounded-full bg-[#e5463a] font-['Liberation_Sans'] text-xs font-bold text-[#ffe5dc]">REC</span>开始录制
              </button>
              <a href="#help" className="ml-[38px] underline">查看在线帮助</a>
            </div>
            <div className="mt-9 grid grid-cols-[226px_226px] gap-9 text-[#c9ced5]">
              <div>
                <label htmlFor="hk1" className="flex h-5 items-center gap-[9px]"><Keyboard className="h-[15px] w-5" />录制/停止</label>
                <input id="hk1" readOnly value="F12" className="mt-[7px] h-8 w-full bg-[#414a55] px-1.5" />
              </div>
              <div>
                <label htmlFor="hk2" className="flex h-5 items-center gap-[9px]"><Keyboard className="h-[15px] w-5" />捕捉图像</label>
                <input id="hk2" readOnly value="F11" className="mt-[7px] h-8 w-full bg-[#414a55] px-1.5" />
              </div>
            </div>
          </div>
        </div>
      </div>
      <div className="absolute top-[98px] right-1.5 border border-black bg-white px-1 leading-7 text-[#333]">录制/停止</div>
    </div>
  );
}

export default function App() {
  return (
    <div className="relative flex h-screen flex-col overflow-hidden bg-white font-['Open_Sans','Noto_Sans_CJK_SC',sans-serif]">
      <Browser />
      <TopBar />
      <SubNav />
      <div className="flex min-h-0 flex-1">
        <Sidebar />
        <main className="flex min-w-0 flex-1 flex-col">
          <Filters />
          <Workspace />
        </main>
      </div>
      <Taskbar />
      <Recorder />
      <svg viewBox="0 0 12 20" className="absolute top-[229px] left-[1420px] h-5 w-3" fill="#fff" stroke="#222"><path d="M1 1v15l3.500-3 2.500 6 2-1-2.500-5.500H11z" /></svg>
    </div>
  );
}
